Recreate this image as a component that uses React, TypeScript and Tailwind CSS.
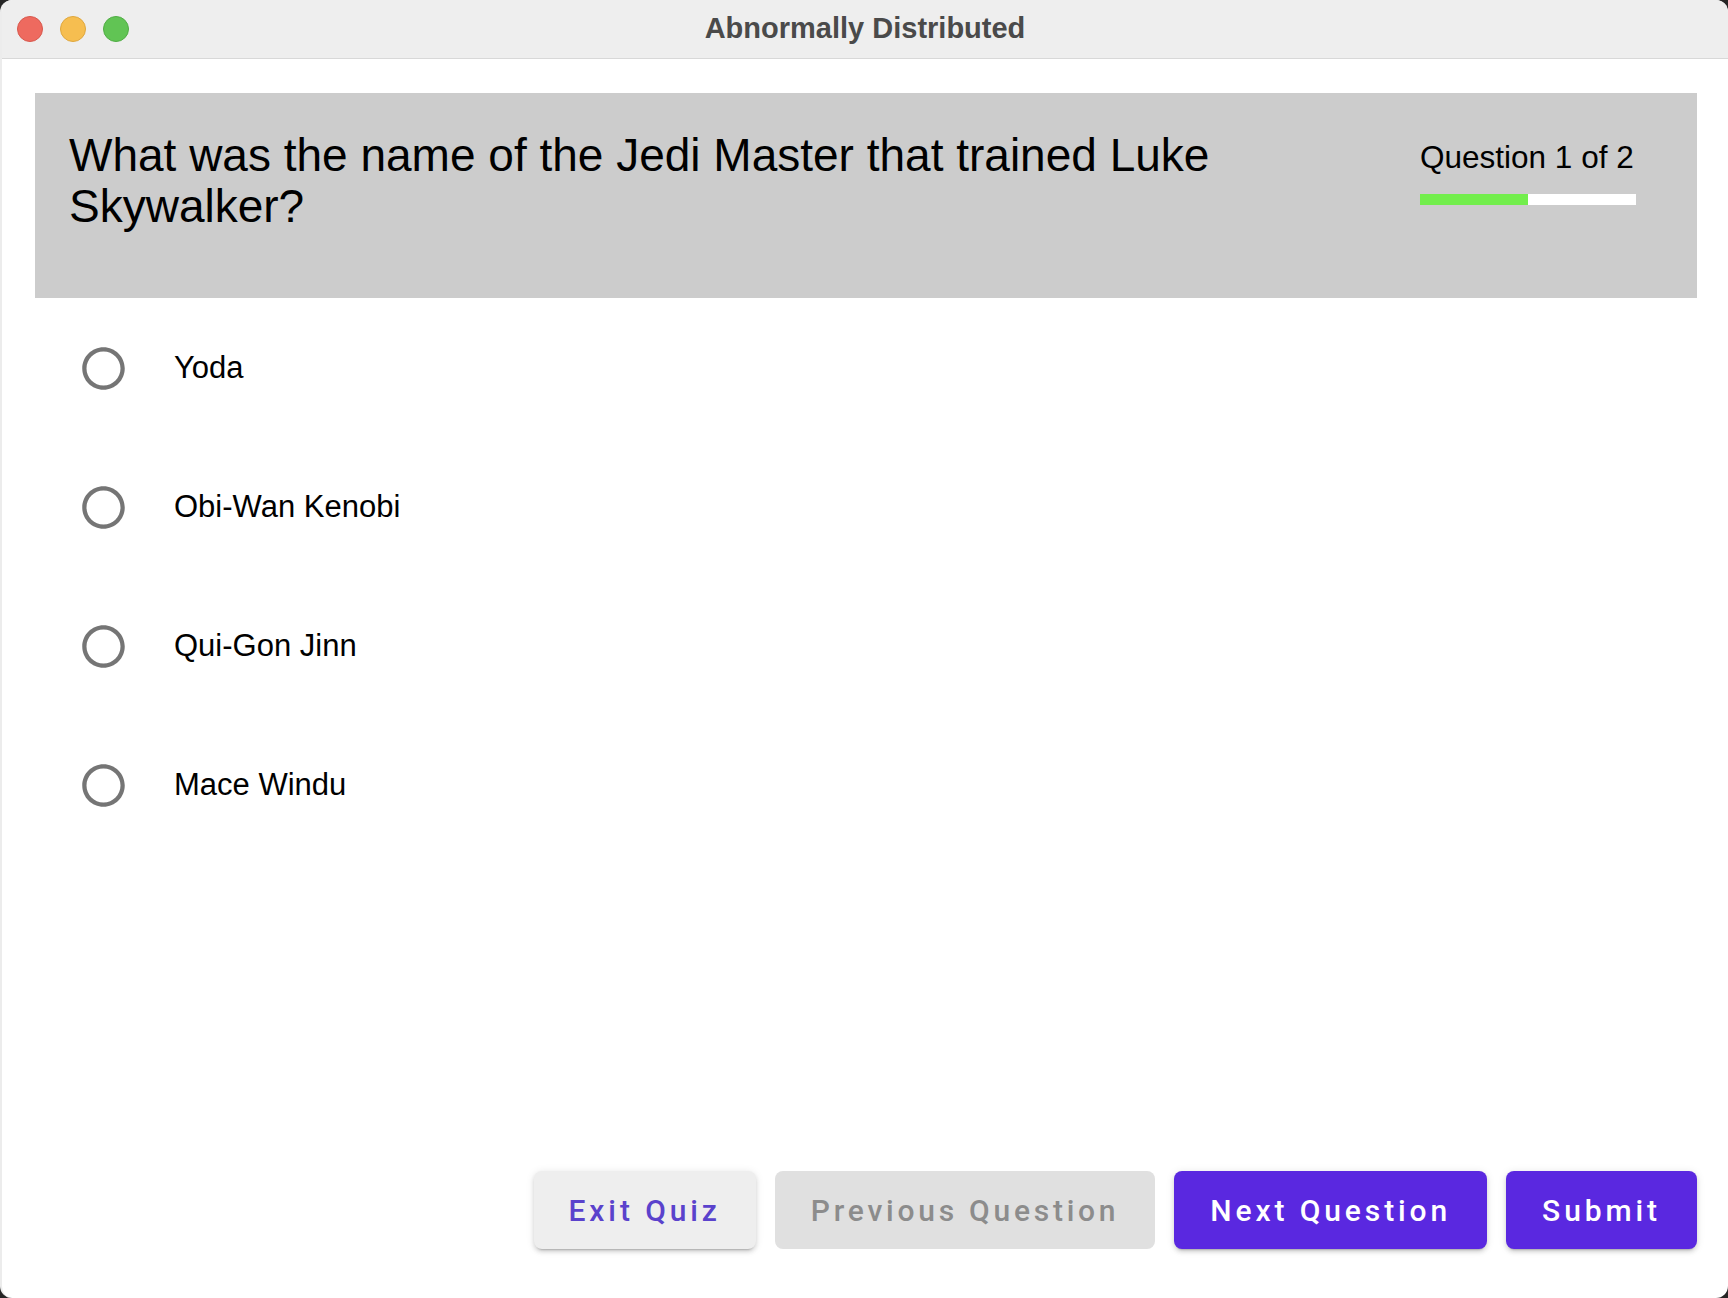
import React from 'react';

const options = ['Yoda', 'Obi-Wan Kenobi', 'Qui-Gon Jinn', 'Mace Windu'];

const sans = { fontFamily: '"Liberation Sans", Arial, sans-serif' };
const roboto = { fontFamily: 'Roboto, "Liberation Sans", sans-serif' };

function RadioIcon() {
  return (
    <svg viewBox="0 0 24 24" className="w-[51px] h-[51px] shrink-0" fill="#757575">
      <path d="M12 2C6.48 2 2 6.48 2 12s4.48 10 10 10 10-4.48 10-10S17.52 2 12 2zm0 18c-4.42 0-8-3.58-8-8s3.58-8 8-8 8 3.58 8 8-3.58 8-8 8z" />
    </svg>
  );
}

function TitleBar() {
  return (
    <div className="relative h-[59px] shrink-0 bg-[#eeeeee] border-b border-[#d8d8d8] flex items-center justify-center">
      <div className="absolute left-[15px] top-[16px] flex gap-[17px]">
        <span className="w-[26px] h-[26px] rounded-full bg-[#ee6a5f] border border-[#d8574c]" />
        <span className="w-[26px] h-[26px] rounded-full bg-[#f6be50] border border-[#dfa73d]" />
        <span className="w-[26px] h-[26px] rounded-full bg-[#61c454] border border-[#4fad43]" />
      </div>
      <span className="text-[29px] font-bold text-[#4a4a4a]" style={sans}>
        Abnormally Distributed
      </span>
    </div>
  );
}

const raised =
  'shadow-[0_4px_2px_-3px_rgba(0,0,0,0.2),0_3px_4px_0_rgba(0,0,0,0.12),0_1px_8px_0_rgba(0,0,0,0.1)]';

export default function App() {
  const current = 1;
  const total = 2;

  return (
    <div className="w-[1728px] h-[1298px] bg-[#262626]">
      <div className="w-full h-full rounded-[12px] overflow-hidden bg-white flex flex-col border-l-2 border-[#ececec]">
        <TitleBar />

        <div className="flex-1 flex flex-col pl-[33px] pr-[31px] pt-[34px] pb-[49px]">
          {/* Question header */}
          <div className="h-[205px] bg-[#cccccc] flex items-start pl-[34px] pr-[61px] pt-[37px]">
            <h1 className="flex-1 pr-[80px] text-[46px] leading-[51px] text-black" style={sans}>
              What was the name of the Jedi Master that trained Luke Skywalker?
            </h1>
            <div className="w-[216px] pt-[9px]">
              <div className="text-[31.5px] leading-[36px] text-black whitespace-nowrap" style={sans}>
                Question {current} of {total}
              </div>
              <div className="mt-[19px] h-[11px] bg-white">
                <div className="h-full bg-[#72ee4c]" style={{ width: `${(current / total) * 100}%` }} />
              </div>
            </div>
          </div>

          {/* Answers */}
          <div className="flex flex-col gap-[88px] mt-[45px] pl-[43px]">
            {options.map((opt) => (
              <label key={opt} className="flex items-center h-[51px] gap-[45px] cursor-pointer">
                <RadioIcon />
                <span className="text-[31px] text-black" style={sans}>
                  {opt}
                </span>
              </label>
            ))}
          </div>

          <div className="flex-1" />

          {/* Actions */}
          <div className="flex justify-end gap-[19px]">
            <button
              className={`h-[78px] px-[35px] rounded-[8px] bg-[#eeeeee] text-[#5a42cc] text-[30px] font-medium tracking-[0.13em] ${raised}`}
              style={roboto}
            >
              Exit Quiz
            </button>
            <button
              disabled
              className="h-[78px] px-[36px] rounded-[8px] bg-[#e0e0e0] text-[#8c8c8c] text-[30px] font-medium tracking-[0.125em]"
              style={roboto}
            >
              Previous Question
            </button>
            <button
              className={`h-[78px] px-[36px] rounded-[8px] bg-[#5a28e0] text-white text-[30px] font-medium tracking-[0.13em] ${raised}`}
              style={roboto}
            >
              Next Question
            </button>
            <button
              className={`h-[78px] px-[36px] rounded-[8px] bg-[#5a28e0] text-white text-[30px] font-medium tracking-[0.13em] ${raised}`}
              style={roboto}
            >
              Submit
            </button>
          </div>
        </div>
      </div>
    </div>
  );
}
